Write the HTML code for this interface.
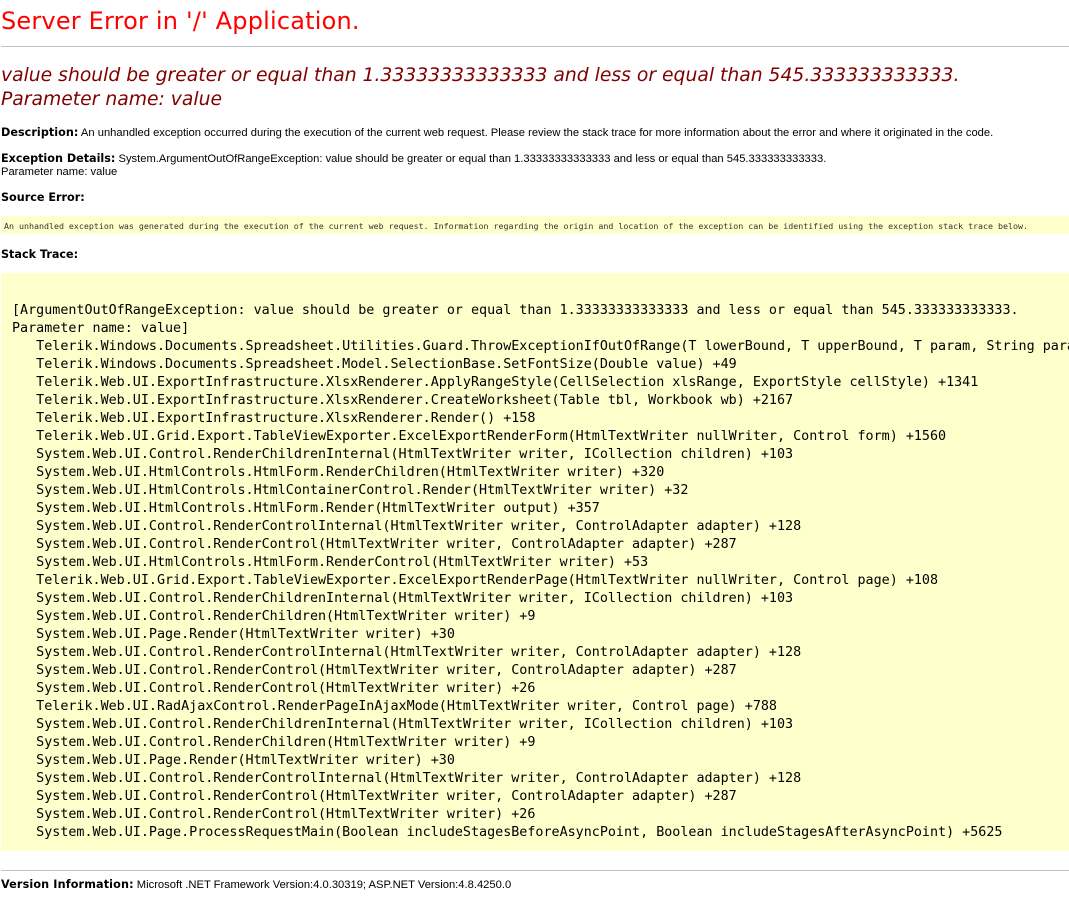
<!DOCTYPE html>
<html><head><meta charset="utf-8"><title>Server Error</title>
<style>
html,body{margin:0;padding:0;background:#fff;width:1069px;height:897px;overflow:hidden;color:#000}
.a{position:absolute;white-space:pre;margin:0}
.v{font-family:"DejaVu Sans",sans-serif}
.l{font-family:"Liberation Sans",sans-serif;font-size:11.2px;line-height:13px}
.l b{font-family:"DejaVu Sans",sans-serif;font-size:11.2px}
.hr{position:absolute;left:1px;width:1068px;height:1px;background:#c0c0c0}
.box{position:absolute;left:1px;width:1068px;background:#ffffcc;overflow:hidden}
pre{position:absolute;margin:0;font-family:"DejaVu Sans Mono",monospace;font-size:13.39px;line-height:18px;white-space:pre}
</style></head><body>
<div class="a v" style="left:1px;top:7px;font-size:24px;letter-spacing:.19px;line-height:29px;color:#ff0000">Server Error in '/' Application.</div>
<div class="hr" style="top:46px"></div>
<div class="a v" style="left:1px;top:64px;font-size:18.75px;line-height:23px;font-style:italic;color:#800000">value should be greater or equal than 1.33333333333333 and less or equal than 545.333333333333.</div>
<div class="a v" style="left:1px;top:88px;font-size:18.75px;line-height:23px;font-style:italic;color:#800000">Parameter name: value</div>
<div class="a l" style="left:1px;top:126px"><b style="letter-spacing:.05px">Description:</b> An unhandled exception occurred during the execution of the current web request. Please review the stack trace for more information about the error and where it originated in the code.</div>
<div class="a l" style="left:1px;top:152px"><b>Exception Details:</b> System.ArgumentOutOfRangeException: value should be greater or equal than 1.33333333333333 and less or equal than 545.333333333333.
Parameter name: value</div>
<div class="a l" style="left:1px;top:191px"><b>Source Error:</b></div>
<div class="box" style="top:216px;height:18px"><div class="a" style="left:3px;top:4px;font-family:'DejaVu Sans Mono',monospace;font-size:8.31px;line-height:13px;color:#333">An unhandled exception was generated during the execution of the current web request. Information regarding the origin and location of the exception can be identified using the exception stack trace below.</div></div>
<div class="a l" style="left:1px;top:248px"><b>Stack Trace:</b></div>
<div class="box" style="top:273px;height:578px"><pre style="left:11px;top:29px">[ArgumentOutOfRangeException: value should be greater or equal than 1.33333333333333 and less or equal than 545.333333333333.
Parameter name: value]
   Telerik.Windows.Documents.Spreadsheet.Utilities.Guard.ThrowExceptionIfOutOfRange(T lowerBound, T upperBound, T param, String paramName) +158
   Telerik.Windows.Documents.Spreadsheet.Model.SelectionBase.SetFontSize(Double value) +49
   Telerik.Web.UI.ExportInfrastructure.XlsxRenderer.ApplyRangeStyle(CellSelection xlsRange, ExportStyle cellStyle) +1341
   Telerik.Web.UI.ExportInfrastructure.XlsxRenderer.CreateWorksheet(Table tbl, Workbook wb) +2167
   Telerik.Web.UI.ExportInfrastructure.XlsxRenderer.Render() +158
   Telerik.Web.UI.Grid.Export.TableViewExporter.ExcelExportRenderForm(HtmlTextWriter nullWriter, Control form) +1560
   System.Web.UI.Control.RenderChildrenInternal(HtmlTextWriter writer, ICollection children) +103
   System.Web.UI.HtmlControls.HtmlForm.RenderChildren(HtmlTextWriter writer) +320
   System.Web.UI.HtmlControls.HtmlContainerControl.Render(HtmlTextWriter writer) +32
   System.Web.UI.HtmlControls.HtmlForm.Render(HtmlTextWriter output) +357
   System.Web.UI.Control.RenderControlInternal(HtmlTextWriter writer, ControlAdapter adapter) +128
   System.Web.UI.Control.RenderControl(HtmlTextWriter writer, ControlAdapter adapter) +287
   System.Web.UI.HtmlControls.HtmlForm.RenderControl(HtmlTextWriter writer) +53
   Telerik.Web.UI.Grid.Export.TableViewExporter.ExcelExportRenderPage(HtmlTextWriter nullWriter, Control page) +108
   System.Web.UI.Control.RenderChildrenInternal(HtmlTextWriter writer, ICollection children) +103
   System.Web.UI.Control.RenderChildren(HtmlTextWriter writer) +9
   System.Web.UI.Page.Render(HtmlTextWriter writer) +30
   System.Web.UI.Control.RenderControlInternal(HtmlTextWriter writer, ControlAdapter adapter) +128
   System.Web.UI.Control.RenderControl(HtmlTextWriter writer, ControlAdapter adapter) +287
   System.Web.UI.Control.RenderControl(HtmlTextWriter writer) +26
   Telerik.Web.UI.RadAjaxControl.RenderPageInAjaxMode(HtmlTextWriter writer, Control page) +788
   System.Web.UI.Control.RenderChildrenInternal(HtmlTextWriter writer, ICollection children) +103
   System.Web.UI.Control.RenderChildren(HtmlTextWriter writer) +9
   System.Web.UI.Page.Render(HtmlTextWriter writer) +30
   System.Web.UI.Control.RenderControlInternal(HtmlTextWriter writer, ControlAdapter adapter) +128
   System.Web.UI.Control.RenderControl(HtmlTextWriter writer, ControlAdapter adapter) +287
   System.Web.UI.Control.RenderControl(HtmlTextWriter writer) +26
   System.Web.UI.Page.ProcessRequestMain(Boolean includeStagesBeforeAsyncPoint, Boolean includeStagesAfterAsyncPoint) +5625</pre></div>
<div class="hr" style="top:870px"></div>
<div class="a l" style="left:1px;top:878px"><b style="letter-spacing:.14px">Version Information:</b> Microsoft .NET Framework Version:4.0.30319; ASP.NET Version:4.8.4250.0</div>
</body></html>
